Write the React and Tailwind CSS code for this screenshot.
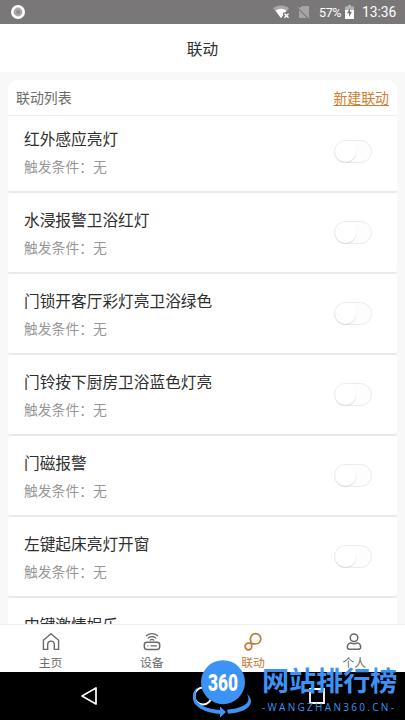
import React, { useState } from 'react';

const scenes = [
  '红外感应亮灯',
  '水浸报警卫浴红灯',
  '门锁开客厅彩灯亮卫浴绿色',
  '门铃按下厨房卫浴蓝色灯亮',
  '门磁报警',
  '左键起床亮灯开窗',
  '中键激情娱乐',
];

function StatusBar() {
  return (
    <div className="h-6 shrink-0 bg-[#7a7779] flex items-center pl-[11px] pr-2 text-white">
      <svg width="14" height="14" viewBox="0 0 14 14">
        <circle cx="7" cy="7" r="7" fill="#fff" />
        <circle cx="7" cy="7" r="4.4" fill="#a9a7a8" />
        <circle cx="7" cy="7" r="2" fill="#8d8b8c" />
      </svg>
      <svg className="ml-auto" width="17" height="14" viewBox="0 0 17 14">
        <path d="M0 3.2C4.6-.4 11.4-.4 16 3.2L8 13z" fill="#a9a7a8" />
        <path d="M2.6 5.8C5.6 3 10.4 3 13.4 5.8L8 13z" fill="#fff" />
        <path d="M10 7.5h7V14h-7z" fill="#7a7779" />
        <path d="M11.5 8.7l4 4M15.5 8.7l-4 4" stroke="#fff" strokeWidth="1.4" />
      </svg>
      <svg className="ml-[7px]" width="13" height="14" viewBox="0 0 13 14">
        <path d="M5 1h7v12L2 3.5z" fill="#a5a3a4" />
        <path d="M2 5v8h8z" fill="#a5a3a4" />
        <path d="M.5 1.5l12 12" stroke="#a5a3a4" />
      </svg>
      <span className="ml-[9px] w-[22px] font-['Roboto',sans-serif] text-[12.5px] leading-none whitespace-nowrap tracking-[-0.4px] relative top-px">57%</span>
      <svg className="ml-[4px]" width="9" height="14" viewBox="0 0 9 14">
        <path d="M3 0h3v1.5h3V5H0V1.5h3z" fill="#b5b3b4" />
        <path d="M0 5h9v9H0z" fill="#fff" />
        <path d="M5 3L2 8.3h2V12l3-5.2H5z" fill="#7a7779" />
      </svg>
      <span className="ml-2 w-[35px] font-['Roboto',sans-serif] text-[13.8px] leading-none whitespace-nowrap relative top-px">13:36</span>
    </div>
  );
}

function Toggle({ on, onClick }) {
  return (
    <button
      onClick={onClick}
      className={`w-[38px] h-[23px] rounded-full border flex items-center ${on ? 'justify-end bg-[#c98132] border-[#c98132]' : 'bg-[#fdfdfd] border-[#ebebeb]'}`}
    >
      <span className="size-[21px] rounded-full bg-white shadow-[0_1px_1px_#d9d9d9]" />
    </button>
  );
}

function SceneRow({ name }) {
  const [on, setOn] = useState(false);
  return (
    <div className="h-[81px] shrink-0 bg-white border-b-2 border-[#e9e9e9] rounded-[3px] pl-4 pr-[25px] flex justify-between">
      <div className="pt-[15px]">
        <h3 className="text-[15.7px] leading-6 text-[#2e2e2e]">{name}</h3>
        <p className="mt-[5px] text-[13.8px] leading-5 text-[#979797]">触发条件：无</p>
      </div>
      <div className="pt-7">
        <Toggle on={on} onClick={() => setOn(!on)} />
      </div>
    </div>
  );
}

function HomeIcon() {
  return (
    <svg width="20" height="20" viewBox="0 0 20 20" fill="none" stroke="currentColor" strokeWidth="1.4" strokeLinejoin="round">
      <path d="M2.4 8.2L10 1.8l7.6 6.4v9.2h-4.3v-5a3.3 3.3 0 0 0-6.6 0v5H2.4z" />
    </svg>
  );
}

function DeviceIcon() {
  return (
    <svg width="20" height="20" viewBox="0 0 20 20" fill="none" stroke="currentColor" strokeWidth="1.3" strokeLinecap="round">
      <rect x="2.3" y="10.2" width="15.4" height="7.2" rx="2.6" strokeWidth="1.5" />
      <path d="M5.8 13.8h.2M9 13.8h5.4" />
      <path d="M4.4 3.8c3.2-2.8 8-2.8 11.2 0M6.3 6c2.2-1.8 5.2-1.8 7.4 0M8.3 8c1-.8 2.4-.8 3.4 0" />
    </svg>
  );
}

function LinkIcon() {
  return (
    <svg width="20" height="20" viewBox="0 0 20 20" fill="none" stroke="currentColor" strokeWidth="1.7" strokeLinecap="round">
      <path d="M7.4 6.8A5.2 5.2 0 1 1 12.6 12C9.800 12 8.400 11.200 5.400 11.200A3.300 3.300 0 1 0 8.700 14.500C8.700 11.800 7.400 9.800 7.400 6.800z" />
    </svg>
  );
}

function UserIcon() {
  return (
    <svg width="20" height="20" viewBox="0 0 20 20" fill="none" stroke="currentColor" strokeWidth="1.5">
      <circle cx="10" cy="5.7" r="3.8" />
      <path d="M6.4 10.9c2.3 1 4.9 1 7.2 0 1.8.5 3.1 2.2 3.1 4.2 0 1.4-.8 2.2-2.1 2.2H5.4c-1.3 0-2.1-.8-2.1-2.2 0-2 1.3-3.7 3.1-4.2z" />
    </svg>
  );
}

const tabs = [
  { label: '主页', icon: HomeIcon },
  { label: '设备', icon: DeviceIcon },
  { label: '联动', icon: LinkIcon, active: true },
  { label: '个人', icon: UserIcon },
];

function Watermark() {
  return (
    <div className="absolute left-[193px] bottom-0 w-[212px] h-[62px] flex text-[#3d93f5] pointer-events-none">
      <svg className="shrink-0" width="62" height="62" viewBox="0 0 62 62">
        <path d="M5 29C-2 34-1 42 2 46c5 6 14 9 25 10v3.5l6-5.5-6-5.5V52C14 51 5 47 3 41c-1-4-.5-8 2-12z" fill="#3d93f5" />
        <path d="M54 36c8 7 5 18-19 19.7l-1-4C51 50 59 45 54 36z" fill="#3d93f5" />
        <circle cx="30" cy="24.2" r="22" fill="#3d93f5" />
        <text x="30" y="32.8" textAnchor="middle" textLength="30" lengthAdjust="spacingAndGlyphs" fill="#fff" fontFamily="Roboto, sans-serif" fontWeight="900" fontSize="24.5">360</text>
      </svg>
      <div className="ml-[7px] pt-[7px]">
        <p className="text-[27.1px] leading-[30px] font-bold whitespace-nowrap">网站排行榜</p>
        <p className="mt-[5px] font-['Open_Sans',sans-serif] text-[10px] leading-[14px] tracking-[2.3px] whitespace-nowrap">-WANGZHAN360.CN-</p>
      </div>
    </div>
  );
}

export default function App() {
  return (
    <div className="relative w-[405px] h-[720px] overflow-hidden flex flex-col bg-[#f8f8f8] font-['Noto_Sans_CJK_SC',sans-serif]">
      <StatusBar />
      <header className="h-12 shrink-0 bg-white flex items-center justify-center pt-[2px] text-[15.7px] text-[#2e2e2e]">
        联动
      </header>

      <main className="flex-1 min-h-0 overflow-hidden mx-2 mt-2 flex flex-col">
        <div className="h-[35px] shrink-0 bg-white rounded-t-[10px] pl-2 pr-[8px] flex items-center justify-between text-[13.9px]">
          <span className="text-[#6c6c6c]">联动列表</span>
          <a href="#" className="text-[#c98132] underline underline-offset-2">新建联动</a>
        </div>
        <div className="flex-1 min-h-0 overflow-hidden flex flex-col border-t border-[#eeeeee]">
          {/* list is scrolled slightly under the card header */}
          <div className="-mt-1">
            {scenes.map((name) => (
              <SceneRow key={name} name={name} />
            ))}
          </div>
        </div>
      </main>

      <nav className="h-12 shrink-0 bg-white border-t border-[#f0f0f0] flex">
        {tabs.map(({ label, icon: Icon, active }) => (
          <div
            key={label}
            className={`flex-1 flex flex-col items-center pt-[7px] ${active ? 'text-[#c07a38]' : 'text-[#6a6a6a]'}`}
          >
            <Icon />
            <span className="mt-[2px] text-[11.8px] leading-[16px]">{label}</span>
          </div>
        ))}
      </nav>

      <div className="h-12 shrink-0 bg-black flex items-center justify-around px-8">
        <svg width="18" height="20" viewBox="0 0 18 20" fill="none" stroke="#fff" strokeWidth="1.7">
          <path d="M16 2v16L2 10z" strokeLinejoin="round" />
        </svg>
        <svg width="20" height="20" viewBox="0 0 20 20" fill="none" stroke="#fff" strokeWidth="1.8">
          <circle cx="10" cy="10" r="8.5" />
        </svg>
        <svg width="18" height="18" viewBox="0 0 18 18" fill="none" stroke="#fff" strokeWidth="1.8">
          <path d="M2 2h14v14H2z" />
        </svg>
      </div>

      <Watermark />
    </div>
  );
}
